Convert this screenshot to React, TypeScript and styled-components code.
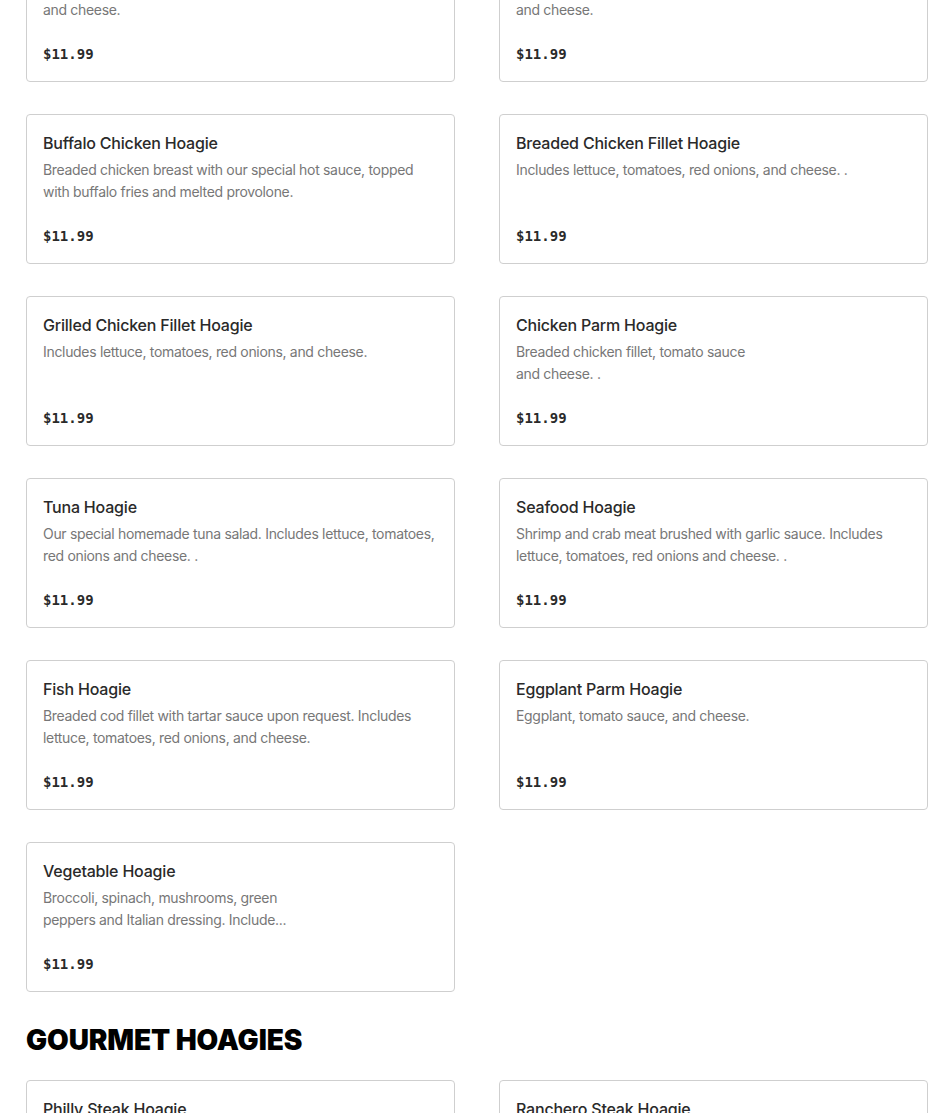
import styled, { createGlobalStyle } from "styled-components";

const GlobalStyle = createGlobalStyle`
  html, body {
    margin: 0;
    padding: 0;
    background: #ffffff;
    font-family: Inter, "Noto Sans", Arial, sans-serif;
    -webkit-font-smoothing: antialiased;
  }
`;

type MenuItem = {
  name: string;
  description: string;
  price: string;
  narrow?: boolean;
};

type Section = {
  title?: string;
  items: MenuItem[];
};

const sections: Section[] = [
  {
    items: [
      {
        name: "Cheesesteak Hoagie",
        description: "Chopped steak, fried onions, tomatoes and cheese.",
        price: "$11.99",
        narrow: true
      },
      {
        name: "Chicken Cheesesteak Hoagie",
        description: "Grilled chicken, fried onions, peppers and cheese.",
        price: "$11.99",
        narrow: true
      },
      {
        name: "Buffalo Chicken Hoagie",
        description:
          "Breaded chicken breast with our special hot sauce, topped with buffalo fries and melted provolone.",
        price: "$11.99"
      },
      {
        name: "Breaded Chicken Fillet Hoagie",
        description: "Includes lettuce, tomatoes, red onions, and cheese. .",
        price: "$11.99"
      },
      {
        name: "Grilled Chicken Fillet Hoagie",
        description: "Includes lettuce, tomatoes, red onions, and cheese.",
        price: "$11.99"
      },
      {
        name: "Chicken Parm Hoagie",
        description: "Breaded chicken fillet, tomato sauce and cheese. .",
        price: "$11.99",
        narrow: true
      },
      {
        name: "Tuna Hoagie",
        description:
          "Our special homemade tuna salad. Includes lettuce, tomatoes, red onions and cheese. .",
        price: "$11.99"
      },
      {
        name: "Seafood Hoagie",
        description:
          "Shrimp and crab meat brushed with garlic sauce. Includes lettuce, tomatoes, red onions and cheese. .",
        price: "$11.99"
      },
      {
        name: "Fish Hoagie",
        description:
          "Breaded cod fillet with tartar sauce upon request. Includes lettuce, tomatoes, red onions, and cheese.",
        price: "$11.99"
      },
      {
        name: "Eggplant Parm Hoagie",
        description: "Eggplant, tomato sauce, and cheese.",
        price: "$11.99"
      },
      {
        name: "Vegetable Hoagie",
        description:
          "Broccoli, spinach, mushrooms, green peppers and Italian dressing. Include...",
        price: "$11.99",
        narrow: true
      }
    ]
  },
  {
    title: "GOURMET HOAGIES",
    items: [
      {
        name: "Philly Steak Hoagie",
        description:
          "Chopped steak, fried onions, lettuce, tomatoes, and cheese.",
        price: "$12.99"
      },
      {
        name: "Ranchero Steak Hoagie",
        description:
          "Chopped steak with ranch dressing, lettuce, tomatoes, and cheese.",
        price: "$12.99"
      }
    ]
  }
];

const Viewport = styled.div`
  height: 1113px;
  overflow: hidden;
`;

const Page = styled.main`
  margin-top: -68px;
  padding: 0 22px 0 26px;
`;

const SectionBlock = styled.section`
  & + & {
    margin-top: 30px;
  }
`;

const SectionTitle = styled.h2`
  margin: 0 0 22px;
  font-family: Inter, "Liberation Sans", Arial, sans-serif;
  font-weight: 900;
  font-size: 28px;
  line-height: 36px;
  letter-spacing: -0.1px;
  color: #000000;
`;

const Grid = styled.div`
  display: grid;
  grid-template-columns: 429px 429px;
  column-gap: 44px;
  row-gap: 32px;
`;

const Card = styled.article`
  box-sizing: border-box;
  height: 150px;
  border: 1px solid #cfcfcf;
  border-radius: 4px;
  padding: 16px;
  display: flex;
  flex-direction: column;
  background: #ffffff;
`;

const ItemName = styled.h3`
  margin: 0;
  font-size: 16px;
  line-height: 24px;
  font-weight: 500;
  letter-spacing: -0.2px;
  color: #2a2a2a;
`;

const Description = styled.p<{ $narrow?: boolean }>`
  margin: 4px 0 0;
  height: 44px;
  max-width: ${({ $narrow }) => ($narrow ? "250px" : "100%")};
  font-size: 14px;
  line-height: 22px;
  letter-spacing: -0.32px;
  color: #777777;
  overflow: hidden;
`;

const Price = styled.div`
  margin-top: 23px;
  font-family: "DejaVu Sans Mono", "Liberation Mono", monospace;
  font-size: 14px;
  line-height: 20px;
  font-weight: 700;
  color: #2a2a2a;
`;

const MenuCard = ({ item }: { item: MenuItem }) => (
  <Card>
    <ItemName>{item.name}</ItemName>
    <Description $narrow={item.narrow}>{item.description}</Description>
    <Price>{item.price}</Price>
  </Card>
);

export default function App() {
  return (
    <>
      <GlobalStyle />
      <Viewport>
        <Page>
          {sections.map((section, i) => (
            <SectionBlock key={i}>
              {section.title && <SectionTitle>{section.title}</SectionTitle>}
              <Grid>
                {section.items.map((item) => (
                  <MenuCard key={item.name} item={item} />
                ))}
              </Grid>
            </SectionBlock>
          ))}
        </Page>
      </Viewport>
    </>
  );
}
